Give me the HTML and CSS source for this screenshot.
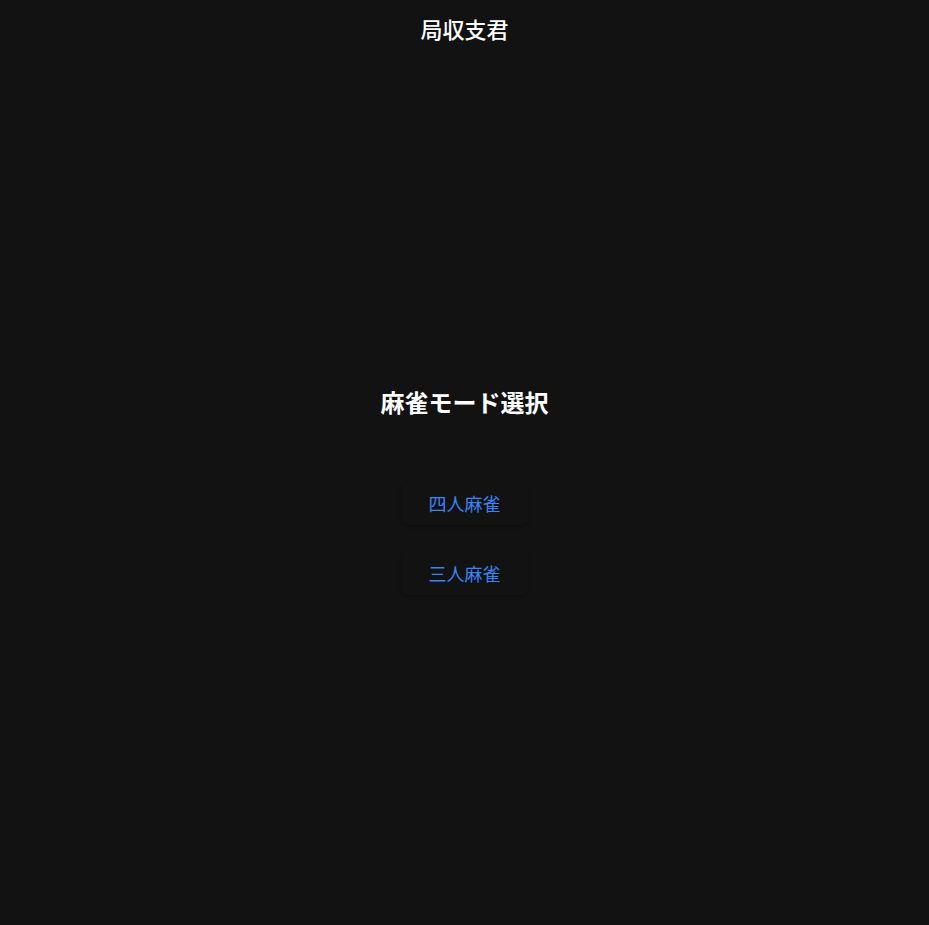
FILE: index.html
```html
<!DOCTYPE html>
<html lang="ja">
<head>
<meta charset="utf-8">
<title>局収支君</title>
<link rel="stylesheet" href="styles.css">
</head>
<body>
<header class="app-header">
  <h1 class="app-title">局収支君</h1>
</header>
<main class="mode-select">
  <h2 class="mode-title">麻雀モード選択</h2>
  <div class="mode-list">
    <button class="mode-button" type="button">四人麻雀</button>
    <button class="mode-button" type="button">三人麻雀</button>
  </div>
</main>
</body>
</html>
```
FILE: styles.css
```css
html, body {
  margin: 0;
  padding: 0;
  background: #121212;
  color: #ffffff;
  font-family: "Noto Sans CJK JP", "Noto Sans", sans-serif;
}
body {
  min-height: 925px;
}
.app-header {
  padding-top: 12px;
  text-align: center;
}
.app-title {
  margin: 0;
  font-size: 22px;
  line-height: 33px;
  font-weight: 500;
}
.mode-select {
  display: flex;
  flex-direction: column;
  align-items: center;
  padding-top: 339px;
}
.mode-title {
  margin: 0;
  font-size: 24px;
  line-height: 36px;
  font-weight: 700;
}
.mode-list {
  display: flex;
  flex-direction: column;
  align-items: center;
  gap: 26px;
  margin-top: 61px;
}
.mode-button {
  width: 128px;
  height: 44px;
  border: none;
  border-radius: 8px;
  background: #121212;
  color: #3b82f6;
  font-family: inherit;
  font-size: 18px;
  line-height: 26px;
  padding: 0;
  box-shadow: 0 2px 3px rgba(0, 0, 0, 0.22);
  cursor: pointer;
}
```
